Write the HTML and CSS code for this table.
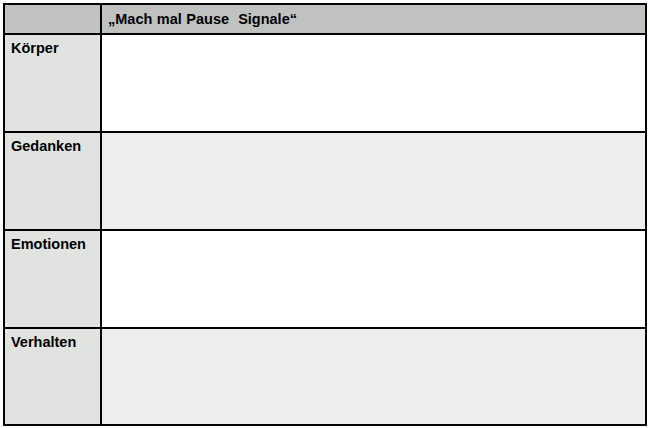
FILE: index.html
```html
<!DOCTYPE html>
<html lang="de">
<head>
<meta charset="utf-8">
<link rel="stylesheet" href="styles.css">
</head>
<body>
<div class="sheet">
  <div class="cell head"></div>
  <div class="cell head title">„Mach mal Pause&nbsp; Signale“</div>
  <div class="cell label">Körper</div>
  <div class="cell white"></div>
  <div class="cell label">Gedanken</div>
  <div class="cell grey"></div>
  <div class="cell label">Emotionen</div>
  <div class="cell white"></div>
  <div class="cell label">Verhalten</div>
  <div class="cell grey"></div>
</div>
</body>
</html>
```
FILE: styles.css
```css
html, body {
  margin: 0;
  padding: 0;
  background: #ffffff;
}
body {
  padding: 3px 0 0 3px;
  font-family: "Liberation Sans", Arial, sans-serif;
}
.sheet {
  display: grid;
  grid-template-columns: 95px 543px;
  grid-template-rows: 28px 96px 96px 96px 95px;
  gap: 2px;
  padding: 2px;
  width: max-content;
  background: #000000;
}
.cell {
  font-size: 14.5px;
  font-weight: bold;
  color: #000000;
  line-height: 1.15;
}
.head {
  background: #c0c2c0;
}
.title {
  padding: 6px 0 0 6px;
  word-spacing: 0.5px;
}
.label {
  background: #e1e3e1;
  padding: 5px 0 0 6px;
}
.white {
  background: #ffffff;
}
.grey {
  background: #ededed;
}
```
